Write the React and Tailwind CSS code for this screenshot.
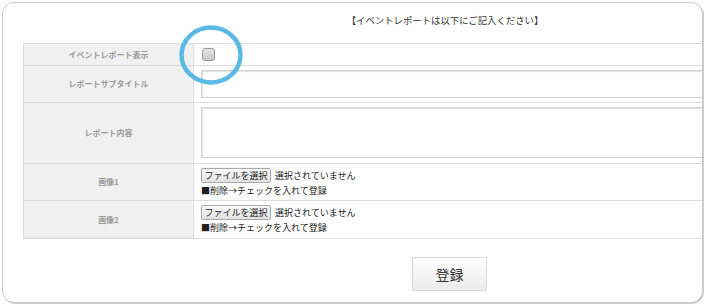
export default function App() {
  const jp = { fontFamily: '"Noto Sans CJK JP", "Noto Sans", sans-serif' };

  const FileCell = () => (
    <div className="flex flex-col pl-[7px] text-[9px] leading-[13px] text-[#222]">
      <div className="flex items-center gap-[4px]">
        <button className="h-[15px] w-[70px] rounded-[2px] border border-[#a9a9a9] bg-gradient-to-b from-[#f8f8f8] to-[#e2e2e2] text-[9px] leading-[13px] text-[#222]">
          ファイルを選択
        </button>
        <span>選択されていません</span>
      </div>
      <div className="mt-[1px]">■削除→チェックを入れて登録</div>
    </div>
  );

  const Label = ({ children }) => (
    <div className="flex w-[170px] shrink-0 items-center justify-center border-r border-[#dcdcdc] bg-[#f1f1f1] text-[8px] font-bold text-[#999]">
      {children}
    </div>
  );

  return (
    <div className="h-[306px] w-[705px] bg-white" style={jp}>
      <div className="ml-[2px] mt-[2px] h-[301px] w-[701px] overflow-hidden rounded-[12px] border border-[#c9c9c9] shadow-[1px_1px_0_#cfcfcf] bg-white">
        <div className="ml-[20px] w-[853px]">
          {/* heading */}
          <div className="flex h-[40px] items-center justify-center pr-[9px] pb-[6px] text-[9.4px] text-[#333]">
            【イベントレポートは以下にご記入ください】
          </div>

          {/* form table */}
          <div className="border-l border-t border-[#dcdcdc]">
            <div className="relative flex h-[22px] border-b border-[#dcdcdc]">
              <Label>イベントレポート表示</Label>
              <div className="flex items-center pl-[8px]">
                <div className="h-[13px] w-[13px] rounded-[3px] border border-[#9a9a9a] bg-gradient-to-b from-[#e6e6e6] to-[#c8c8c8]" />
              </div>
              <svg
                className="absolute left-[153px] top-[-21px]"
                width="68"
                height="64"
                viewBox="0 0 68 64"
              >
                <ellipse cx="34" cy="32" rx="29.5" ry="27.5" fill="none" stroke="#5bb9e6" strokeWidth="4.5" />
              </svg>
            </div>

            <div className="flex h-[37px] border-b border-[#dcdcdc]">
              <Label>レポートサブタイトル</Label>
              <div className="pl-[7px] pt-[4px]">
                <input
                  type="text"
                  className="h-[28px] w-[560px] border border-[#d2d2d2] shadow-[inset_1px_1px_1px_#e4e4e4] outline-none"
                />
              </div>
            </div>

            <div className="flex h-[61px] border-b border-[#dcdcdc]">
              <Label>レポート内容</Label>
              <div className="pl-[7px] pt-[4px]">
                <textarea className="block h-[51px] w-[560px] resize-none border border-[#d2d2d2] shadow-[inset_1px_1px_1px_#e4e4e4] outline-none" />
              </div>
            </div>

            <div className="flex h-[37px] items-stretch border-b border-[#dcdcdc]">
              <Label>画像1</Label>
              <div className="flex items-center">
                <FileCell />
              </div>
            </div>

            <div className="flex h-[38px] items-stretch border-b border-[#dcdcdc]">
              <Label>画像2</Label>
              <div className="flex items-center">
                <FileCell />
              </div>
            </div>
          </div>

          {/* submit */}
          <div className="flex justify-center pt-[18px]">
            <button className="h-[34px] w-[75px] border border-[#dadada] bg-gradient-to-b from-[#fdfdfd] to-[#ececec] text-[14px] text-[#333]">
              登録
            </button>
          </div>
        </div>
      </div>
    </div>
  );
}
